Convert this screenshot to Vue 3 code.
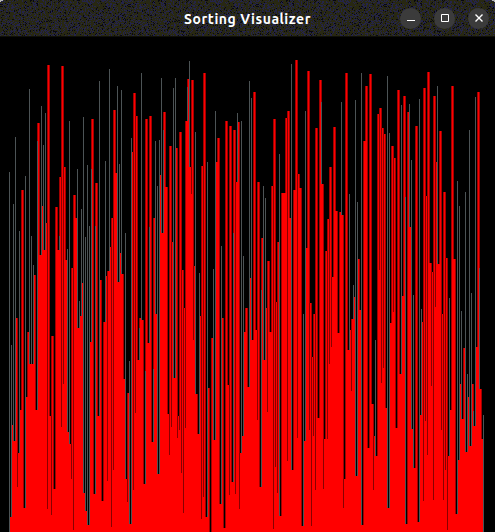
<script setup>
// One entry per bar, left to right: [top, top of the grey trail, end of the dark seam]
const bars = [
  [532, 172], [517, 345], [425, 204], [441, 137], [318, 0, 487], [453, 231], [410], [190], [508, 176], [397],
  [332, 89], [364, 236], [364, 265], [275], [410, 141], [123], [255, 106], [206, 145], [250, 113], [223, 0, 509],
  [65], [416, 0, 515], [336], [489], [207], [250, 236], [177, 0, 427], [66, 0, 384], [167], [260, 249],
  [432, 121], [444, 0, 479], [268, 0, 530], [195], [218, 169], [328, 301], [316, 209], [283, 117], [493, 237], [511, 165],
  [525, 226], [342, 169], [119], [494, 226], [183], [416, 81], [280], [501], [322, 161], [276, 0, 481],
  [271, 69], [247, 0, 527], [218, 0, 470], [110], [173, 86], [282, 164], [253, 90], [274], [379, 233], [479, 0, 502],
  [393, 361], [524, 138], [152, 0, 490], [93, 0, 413], [116], [360, 328], [318, 73], [320], [484, 371], [119],
  [343, 227], [116], [442, 369], [218, 141], [314, 186], [474, 140], [175, 78], [233, 130], [112], [187],
  [414, 0, 455], [146, 0, 427], [242, 88], [378, 78], [148, 0, 438], [416, 0, 430], [132, 0, 473], [270, 0, 513], [308, 0, 428], [121, 87],
  [79, 61], [167, 0, 194], [80, 0, 340], [266, 132], [394], [434, 273], [316, 0, 519], [166, 0, 497], [73], [517, 162],
  [388], [532], [338, 269], [440, 111], [162], [138, 0, 501], [504, 246], [318], [528], [121],
  [385, 0, 495], [126], [482, 233], [130, 0, 494], [182, 113], [122, 0, 509], [453, 121], [436, 256], [332], [308],
  [387, 81], [278, 98], [340], [92], [330, 0, 420], [182], [487, 290], [238, 186], [360, 198], [308, 0, 412],
  [261], [332], [186, 0, 529], [119, 0, 467], [302, 0, 493], [242, 154], [516], [193], [193], [118, 0, 461],
  [111], [218, 64], [470], [190], [60, 0, 438], [174], [188], [526, 314], [441, 111], [248],
  [71, 0, 430], [303, 0, 526], [357, 0, 436], [314, 0, 490], [128], [418], [80, 102], [184, 0, 489], [439], [251, 0, 439],
  [219, 0, 364], [167, 0, 347], [277], [127], [211], [333], [212, 102], [215, 0, 508], [479], [73],
  [350, 194], [330, 0, 391], [319, 285], [297, 100], [476, 202], [259], [310, 73], [525], [141], [86],
  [448], [74], [404, 0, 490], [436, 340], [456], [114, 0, 270], [108, 0, 383], [128, 0, 368], [134], [408, 76],
  [508, 133], [323], [146, 0, 312], [158], [428], [90], [374, 105], [296], [96, 197], [524, 0, 491],
  [112, 104], [227, 160], [429, 295], [468], [126], [522, 99], [415, 309], [322, 0, 501], [88, 0, 421], [196, 0, 455],
  [72], [263, 0, 386], [272, 0, 500], [96, 0, 307], [162, 86], [264], [131, 0, 430], [314, 0, 500], [192, 0, 470], [258, 0, 530],
  [456, 298], [410], [86], [259], [514, 181], [460, 206], [384, 311], [419], [348, 192], [452, 374],
  [397, 130], [446, 293], [384, 411], [426, 97], [347], [92, 268], [389], [439, 415]
]

const TOP = 37
const BOTTOM = 532
const rects = []
const add = (x, from, to, kind) => {
  if (to > from) rects.push({ x, y: from - TOP, h: to - from, kind })
}

bars.forEach(([top, trail = 0, seam = 0], i) => {
  const x = 8 + i * 2
  const next = i + 1 < bars.length ? bars[i + 1][0] : BOTTOM
  const high = Math.min(top, next)
  const low = Math.max(top, next)
  add(x, top, BOTTOM, 'bar')
  add(x + 1, high, low, 'edge')
  add(x + 1, low, BOTTOM, 'bar')
  if (seam) add(x + 1, low, seam, 'seam')
  if (trail) add(x + 1, trail, low, 'trail')
})

// Dithered title bar: navy and near-black specks scattered over olive
const grain = { navy: '', dark: '' }
let seed = 7
for (let y = 0; y < 36; y++) {
  for (let x = 0; x < 128; x++) {
    seed = (seed * 16807) % 2147483647
    const n = seed / 2147483647
    if (n < 0.3) grain.navy += `M${x} ${y}h1v1h-1z`
    else if (n < 0.4) grain.dark += `M${x} ${y}h1v1h-1z`
  }
}
</script>

<template>
  <div class="window">
    <header class="titlebar">
      <svg class="grain" width="495" height="37" aria-hidden="true">
        <defs>
          <pattern id="grain" width="128" height="36" patternUnits="userSpaceOnUse">
            <rect width="128" height="36" fill="#282812" />
            <path :d="grain.navy" fill="#24244a" />
            <path :d="grain.dark" fill="#080812" />
          </pattern>
        </defs>
        <rect width="495" height="36" fill="url(#grain)" />
        <rect y="36" width="495" height="1" fill="#101008" />
        <path d="M0 0h3v1H1v1H0zM492 0h3v2h-1V1h-2z" fill="#b8b8b8" />
      </svg>
      <h1 class="title">Sorting Visualizer</h1>
      <div class="controls">
        <button class="control" aria-label="Minimize">
          <svg width="21" height="21"><path d="M7 12.5h8" /></svg>
        </button>
        <button class="control" aria-label="Maximize">
          <svg width="21" height="21"><path d="M7.5 6.5h7v7h-7z" /></svg>
        </button>
        <button class="control" aria-label="Close">
          <svg width="21" height="21"><path class="cross" d="M7.5 6.5l7 7M14.5 6.5l-7 7" /></svg>
        </button>
      </div>
    </header>
    <svg class="chart" width="495" height="495" shape-rendering="crispEdges">
      <rect v-for="(r, i) in rects" :key="i" :class="r.kind" :x="r.x" :y="r.y" width="1" :height="r.h" />
    </svg>
  </div>
</template>

<style>
body {
  margin: 0;
  background: #000;
}
</style>

<style scoped>
.window {
  width: 495px;
  height: 532px;
  overflow: hidden;
  background: #000;
}
.titlebar {
  position: relative;
  display: grid;
  grid-template-columns: 1fr auto 1fr;
  align-items: center;
  height: 37px;
}
.grain {
  position: absolute;
  inset: 0;
}
.title {
  position: relative;
  grid-column: 2;
  margin: 0;
  color: #fff;
  font: 700 14px/20px Ubuntu, "Noto Sans", sans-serif;
  letter-spacing: 0.55px;
  white-space: nowrap;
}
.controls {
  position: relative;
  display: flex;
  justify-content: flex-end;
  gap: 13px;
  padding-right: 6px;
}
.control {
  width: 21px;
  height: 21px;
  padding: 0;
  border: 0;
  border-radius: 50%;
  background: #3b3b3b;
}
.control svg {
  display: block;
  fill: none;
  stroke: #fff;
}
.cross {
  stroke-width: 1.4;
}
.chart {
  display: block;
}
.bar {
  fill: #f00;
}
.edge {
  fill: #a00000;
}
.seam {
  fill: #880000;
}
.trail {
  fill: #4c5355;
}
</style>
